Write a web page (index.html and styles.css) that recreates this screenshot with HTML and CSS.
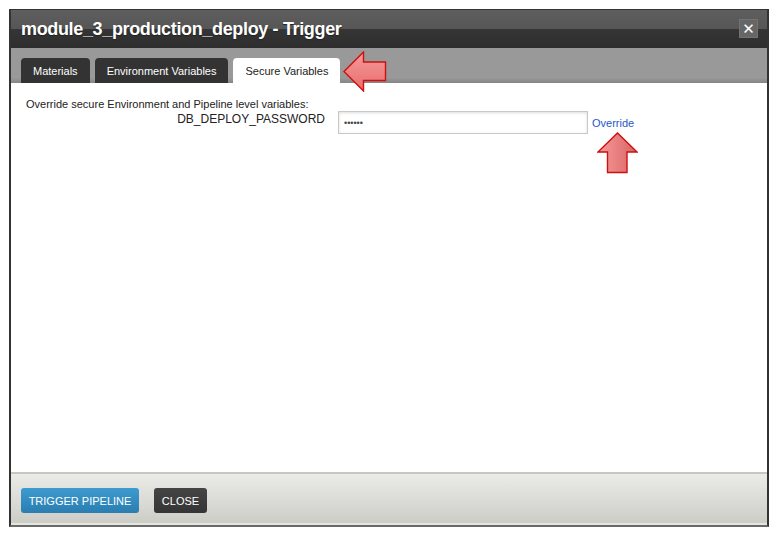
FILE: index.html
```
<!DOCTYPE html>
<html lang="en">

<head>
    <meta charset="UTF-8">
    <meta name="viewport" content="width=device-width, initial-scale=1.0">
    <title>Trigger</title>
    <link rel="stylesheet" href="styles.css">
</head>

<body>
    <div class="dialog">
        <div class="dialog_header">
            <h1>module_3_production_deploy - Trigger</h1>
            <button class="close_x">&#10005;</button>
        </div>

        <div class="tabs">
            <button class="tab">Materials</button>
            <button class="tab">Environment Variables</button>
            <button class="tab current">Secure Variables</button>
        </div>

        <div class="content">
            <p class="intro">Override secure Environment and Pipeline level variables:</p>
            <div class="var_row">
                <label class="var_name">DB_DEPLOY_PASSWORD</label>
                <input type="password" class="var_value" value="secret" readonly>
                <span class="override">Override</span>
            </div>
        </div>

        <div class="footer">
            <button class="btn btn_blue">TRIGGER PIPELINE</button>
            <button class="btn btn_dark">CLOSE</button>
        </div>

        <!-- red callout arrows -->
        <svg class="arrow arrow_left" width="44" height="41" viewBox="0 0 44 41">
            <defs>
                <linearGradient id="gl" x1="0" y1="0" x2="0" y2="1">
                    <stop offset="0" stop-color="#f59a9a"/>
                    <stop offset="1" stop-color="#e86d6d"/>
                </linearGradient>
            </defs>
            <path d="M1 20.5 L20.5 1 L20.5 11 L42.5 11 L42.5 29.5 L20.5 29.5 L20.5 40 Z" fill="url(#gl)" stroke="#cc1010" stroke-width="1.4"/>
        </svg>
        <svg class="arrow arrow_up" width="41" height="42" viewBox="0 0 41 42">
            <defs>
                <linearGradient id="gu" x1="0" y1="0" x2="1" y2="0">
                    <stop offset="0" stop-color="#f89a9a"/>
                    <stop offset="1" stop-color="#d96464"/>
                </linearGradient>
            </defs>
            <path d="M20.5 1 L40 20 L30 20 L30 40.5 L10.5 40.5 L10.5 20 L1 20 Z" fill="url(#gu)" stroke="#cc1010" stroke-width="1.4"/>
        </svg>
    </div>
</body>

</html>
```

FILE: styles.css
```
body {
    margin: 0;
    background-color: #fff;
    font-family: "Liberation Sans", Arial, sans-serif;
}

.dialog {
    position: relative;
    margin: 9px 0 0 9px;
    width: 756px;
    border: 2px solid #333;
    border-top: 1px solid #333;
    border-bottom: 2px solid #6a6a6a;
    display: flex;
    flex-direction: column;
}

.dialog_header {
    height: 38px;
    display: flex;
    align-items: center;
    justify-content: space-between;
    padding: 0 9px 0 10px;
    background: linear-gradient(#5e5e5e, #565656 50%, #353535 50%, #2e2e2e);
}

.dialog_header h1 {
    margin: 0;
    color: #fff;
    font-size: 18px;
    font-weight: bold;
    letter-spacing: -0.35px;
    text-shadow: 0 1px 1px #222;
}

.close_x {
    width: 19px;
    height: 19px;
    padding: 0;
    margin-top: -1px;
    border: 1px solid #727272;
    background-color: #666;
    color: #fff;
    font-size: 15px;
    font-weight: bold;
    line-height: 16px;
    font-family: "DejaVu Sans", sans-serif;
}

.tabs {
    height: 35px;
    box-sizing: border-box;
    padding: 10px 0 0 10px;
    display: flex;
    align-items: flex-end;
    gap: 5px;
    background: linear-gradient(#999 85%, #858585);
}

.tab {
    height: 25px;
    padding: 0 12px;
    border: none;
    border-radius: 4px 4px 0 0;
    background-color: #333;
    color: #fff;
    font-family: "Liberation Sans", Arial, sans-serif;
    font-size: 11px;
}

.tab.current {
    background-color: #fff;
    color: #222;
}

.content {
    height: 389px;
    padding: 15px 15px 0 15px;
    background-color: #fff;
    box-sizing: border-box;
}

.intro {
    margin: 0;
    font-size: 11px;
    line-height: 13px;
    color: #222;
}

.var_row {
    display: flex;
    align-items: flex-start;
    margin-top: 0;
}

.var_name {
    width: 299px;
    text-align: right;
    font-size: 12px;
    line-height: 14px;
    padding-top: 1px;
    color: #222;
}

.var_value {
    width: 250px;
    height: 23px;
    box-sizing: border-box;
    margin: 0 0 0 13px;
    padding: 0 5px;
    border: 1px solid #c8c8c8;
    box-shadow: inset 0 1px 3px #ddd;
    font-size: 9px;
    color: #444;
    outline: none;
}

.override {
    margin: 6px 0 0 4px;
    font-size: 11px;
    color: #1f58c8;
    cursor: pointer;
}

.footer {
    height: 53px;
    box-sizing: border-box;
    padding: 14px 0 0 10px;
    display: flex;
    align-items: flex-start;
    gap: 15px;
    border-top: 2px solid #c6c6c2;
    border-bottom: 2px solid #e6e6df;
    background: linear-gradient(#ebebe7, #cdcdc8);
}

.btn {
    height: 25px;
    padding: 0;
    border: none;
    border-radius: 3px;
    color: #fff;
    font-family: "Liberation Sans", Arial, sans-serif;
    font-size: 11px;
    white-space: nowrap;
}

.btn_blue {
    background: linear-gradient(#3d9bd0, #2a7db0);
    width: 118px;
}

.btn_dark {
    background: linear-gradient(#454545, #353535);
    width: 53px;
}

.arrow {
    position: absolute;
}

.arrow_left {
    left: 332px;
    top: 41px;
}

.arrow_up {
    left: 586px;
    top: 122px;
}
```
